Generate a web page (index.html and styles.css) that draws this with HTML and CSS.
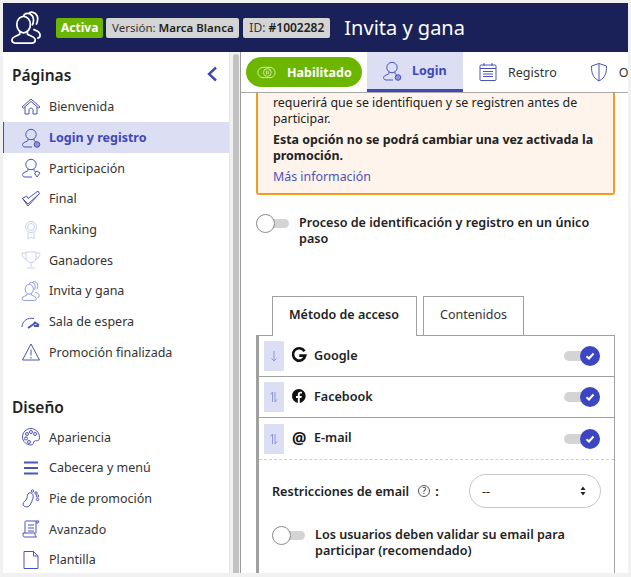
FILE: index.html
```html
<!DOCTYPE html>
<html lang="es">
<head>
<meta charset="utf-8">
<title>Invita y gana</title>
<link rel="stylesheet" href="styles.css">
</head>
<body>
<svg class="defs" width="0" height="0">
  <defs>
    <symbol id="user" viewBox="0 0 20 20"><circle cx="10" cy="6.500" r="5.200"/><path d="M7 11v1.500c0 1-5.500 1.500-5.500 4 0 1.500 1 2.500 2.500 2.500h7M13 11v1.500c0 .5 1 1 2 1.500"/></symbol>
    <symbol id="users" viewBox="0 0 34 34"><ellipse cx="14" cy="14" rx="7" ry="8.500"/><path d="M10 22v2c-2 1.500-8 2-8 6 0 2 1 3 3 3h18c2 0 3-1 3-3 0-4-6-4.500-8-6v-2M14 5c1-3 6-4 9 0 1.500 2 1.500 6 0 10M19 3c2-3 7-2 9 2 1 3 .5 6-1 9M24 19c3 1 7 2 7 6 0 2-1 3-3 3"/></symbol>
  </defs>
</svg>
<div class="app">
  <header class="topbar">
    <svg class="logo" viewBox="0 0 34 34"><use href="#users"/></svg>
    <span class="tag tag-green">Activa</span>
    <span class="tag tag-version">Versión: <b>Marca Blanca</b></span>
    <span class="tag tag-id">ID: <b>#1002282</b></span>
    <h1 class="title">Invita y gana</h1>
  </header>
  <div class="body">
    <aside class="side">
      <nav class="side-scroll">
        <div class="side-head">
          <h2 class="side-title">Páginas</h2>
          <svg class="chev" viewBox="0 0 12 16"><path d="M10 1.500 3 8l7 6.500"/></svg>
        </div>
        <a class="item"><svg class="ic" viewBox="0 0 20 20"><path d="M1 10 10 2l9 8-1.500 1L10 4.500 2.500 11zM4 10v7h4v-4c0-2.500 4-2.500 4 0v4h4v-7"/></svg>Bienvenida</a>
        <a class="item active"><svg class="ic" viewBox="0 0 20 20"><use href="#user"/><circle cx="16" cy="16.500" r="2.800" class="fillsoft"/></svg>Login y registro</a>
        <a class="item"><svg class="ic" viewBox="0 0 20 20"><use href="#user"/><path d="m13.500 15 2.500-2 3 2-3 4z"/></svg>Participación</a>
        <a class="item"><svg class="ic" viewBox="0 0 20 20"><path d="M1.500 9.500 7 15 18.500 4.500M1.500 9.500l4-2.500L7 9.500 17 2l1.500 2.500M1.500 9.500 7 17l11.500-12.500"/></svg>Final</a>
        <a class="item"><svg class="ic faint" viewBox="0 0 20 20"><circle cx="10" cy="7" r="5.500"/><circle cx="10" cy="7" r="3.500"/><path d="M7 12v7l3-2 3 2v-7"/></svg>Ranking</a>
        <a class="item"><svg class="ic faint" viewBox="0 0 20 20"><path d="M5 2h10v6c0 6-10 6-10 0zM5 3H1c0 4 2 6 5 6.500M15 3h4c0 4-2 6-5 6.500M10 13v4M6 18h8"/></svg>Ganadores</a>
        <a class="item"><svg class="ic" viewBox="0 0 34 34"><use href="#users"/></svg>Invita y gana</a>
        <a class="item"><svg class="ic" viewBox="0 0 20 20"><path d="M1 15C1 9 7 5 13 6.500"/><path d="M7 16 15 10.500M13 10l5 3M13 14h5" class="bold"/></svg>Sala de espera</a>
        <a class="item"><svg class="ic" viewBox="0 0 20 20"><path d="M10 2 1.500 18h17zM10 7.500v6M10 15v1.500"/></svg>Promoción finalizada</a>
        <h2 class="side-title second">Diseño</h2>
        <a class="item"><svg class="ic" viewBox="0 0 20 20"><path d="M10 1.500c-5 0-8.500 4-8.500 8.500s4 8 8.500 8c3 0 2-3 3.500-4 1.500-.8 5 1 5-3.500 0-5-4-9-8.500-9z"/><circle cx="6" cy="7" r="1.500"/><circle cx="10" cy="5" r="1.500"/><circle cx="14" cy="7" r="1.500"/><circle cx="5" cy="11.500" r="1.500"/><circle cx="8" cy="15" r="1.500"/></svg>Apariencia</a>
        <a class="item"><svg class="ic" viewBox="0 0 20 20"><path class="bold" d="M3 4.500h14M3 10h14M3 15.500h14"/></svg>Cabecera y menú</a>
        <a class="item"><svg class="ic" viewBox="0 0 20 20"><path d="M8 4c3-1 5 2 4 5-1 2.500-1 4-3 7-2 3-7 2-7-1 0-2 3-3 4-6 .5-2 0-4 2-5z"/><circle cx="11.500" cy="2" r="1.200"/><circle cx="15" cy="4" r="1.200"/><circle cx="16.500" cy="7" r="1.200"/><circle cx="16.500" cy="10.500" r="1.200"/></svg>Pie de promoción</a>
        <a class="item"><svg class="ic" viewBox="0 0 20 20"><path d="M5 2h13l-1 2h-2M5 2c-1 0-1 1-1 2v10M15 2v12M7 6h6M7 9h6M7 12h6M2 14h12c0 1 0 4 1.500 4H3c-1 0-1-3-1-4z"/></svg>Avanzado</a>
        <a class="item"><svg class="ic" viewBox="0 0 20 20"><path d="M3 1.500h9.500L17 6v12.500H3zM12.500 1.500V6H17"/></svg>Plantilla</a>
      </nav>
      <div class="scrollbar"><span class="thumb"></span></div>
    </aside>
    <main class="main">
      <div class="tabs">
        <button class="enabled"><svg class="pill-ic" viewBox="0 0 22 14"><rect x="1" y="1" width="20" height="12" rx="6"/><circle cx="12" cy="7" r="4.500"/><path d="M11 5v4M13 5v4"/></svg>Habilitado</button>
        <a class="tab active"><svg class="ic" viewBox="0 0 20 20"><use href="#user"/><circle cx="16" cy="16.500" r="2.800" class="fillsoft"/></svg>Login</a>
        <a class="tab tab-reg"><svg class="ic" viewBox="0 0 20 20"><rect x="2" y="3" width="16" height="15.500" rx="1"/><path d="M6 1v3M14 1v3M2 6.500h16M5 9.500h10M5 12h10M5 14.500h10"/></svg>Registro</a>
        <a class="tab"><svg class="ic" viewBox="0 0 20 20"><path d="M10 1.500 2.500 4c0 7 1 11.500 7.500 15 6.500-3.500 7.500-8 7.500-15zM10 1.500V19"/></svg>O</a>
      </div>
      <div class="content">
        <div class="notice">
          <p class="n-text">requerirá que se identifiquen y se registren antes de participar.</p>
          <p class="n-bold">Esta opción no se podrá cambiar una vez activada la promoción.</p>
          <a class="n-link">Más información</a>
        </div>
        <div class="opt opt-main">
          <span class="sw"><span class="knob"></span></span>
          <span class="opt-label">Proceso de identificación y registro en un único paso</span>
        </div>
        <div class="subtabs">
          <span class="subtab on">Método de acceso</span>
          <span class="subtab">Contenidos</span>
        </div>
        <div class="panel">
          <div class="row">
            <span class="drag"><svg viewBox="0 0 14 14"><path d="M7 2v10M4.500 9.500 7 12l2.500-2.500"/></svg></span>
            <svg class="brand" viewBox="1 1 14 14"><path class="g" d="M13.500 4.200A6.200 6.200 0 1 0 14.300 8.600H8.300"/></svg>
            <span class="row-label">Google</span>
            <span class="sw on"><span class="knob"><svg viewBox="0 0 12 12"><path d="m2.500 6.200 2.500 2.300 4.500-5"/></svg></span></span>
          </div>
          <div class="row">
            <span class="drag"><svg viewBox="0 0 14 14"><path d="M5.500 12V2L3.500 4.500M8 2v10l2-2.500"/></svg></span>
            <svg class="brand" viewBox="1 1 14 14"><path class="f" d="M8 1a7 7 0 0 0-1.200 13.900V10H5V8h1.800V6.500c0-1.800 1-2.800 2.700-2.800l1.500.1v1.800h-1c-.8 0-1.200.5-1.200 1.100V8h2l-.3 2H8.800v4.900A7 7 0 0 0 8 1z"/></svg>
            <span class="row-label">Facebook</span>
            <span class="sw on"><span class="knob"><svg viewBox="0 0 12 12"><path d="m2.500 6.200 2.500 2.300 4.500-5"/></svg></span></span>
          </div>
          <div class="row row-last">
            <span class="drag"><svg viewBox="0 0 14 14"><path d="M5.500 12V2L3.500 4.500M8 2v10l2-2.500"/></svg></span>
            <span class="at">@</span>
            <span class="row-label">E-mail</span>
            <span class="sw on"><span class="knob"><svg viewBox="0 0 12 12"><path d="m2.500 6.200 2.500 2.300 4.500-5"/></svg></span></span>
          </div>
          <div class="email">
            <div class="restrict">
              <span class="r-label">Restricciones de email</span>
              <span class="help">?</span>
              <span class="r-colon">:</span>
              <span class="select">--<svg viewBox="0 0 8 12"><path d="M4 1.500 6.500 5h-5zM4 10.500 1.500 7h5z"/></svg></span>
            </div>
            <div class="opt">
              <span class="sw"><span class="knob"></span></span>
              <span class="opt-label">Los usuarios deben validar su email para participar (recomendado)</span>
            </div>
          </div>
        </div>
      </div>
    </main>
  </div>
</div>
</body>
</html>
```

FILE: styles.css
```css
* { box-sizing: border-box; }
html, body { margin: 0; height: 100%; overflow: hidden; }
body { background: #f1f1f1; font-family: "Noto Sans", sans-serif; color: #222; font-size: 13px; }
.defs { position: absolute; }
.app { width: 625px; height: 570px; margin: 3px 0 0 3px; display: flex; flex-direction: column; overflow: hidden; background: #fff; }

.topbar { height: 49px; background: #192158; display: flex; align-items: center; padding-left: 7px; flex: none; }
.logo { width: 33px; height: 33px; fill: none; stroke: #fff; stroke-width: 1.800; margin-right: 13px; }
.tag { height: 20px; line-height: 20px; padding: 0 5px; background: #d4d4d4; border-radius: 2px; font-size: 11.500px; color: #333; margin-right: 3px; white-space: nowrap; }
.tag b { font-weight: 600; color: #222; }
.tag-green { background: #6db600; color: #fff; font-weight: 700; padding: 0 5px; font-size: 12px; }
.tag-version { width: 133px; text-align: center; padding: 0; margin-right: 4px; }
.tag-id { font-size: 12px; width: 87px; text-align: center; padding: 0; }
.title { font-size: 20px; font-weight: 400; color: #fff; margin: 0 0 0 11px; white-space: nowrap; }

.body { flex: 1; display: flex; min-height: 0; }
.side { width: 237px; display: flex; flex: none; }
.side-scroll { width: 226px; flex: none; padding-top: 12px; overflow: hidden; }
.scrollbar { width: 11px; padding: 2px 1px 0 3px; background: #f1f1f1; border-left: 1px solid #e6e6e6; }
.thumb { display: block; height: 100%; background: #c2c2c2; border-radius: 3px 3px 0 0; }
.side-head { display: flex; justify-content: space-between; align-items: center; padding-right: 11px; }
.side-title { font-size: 15.500px; font-weight: 600; margin: 0 0 5.500px 9px; color: #222; }
.second { margin-top: 28.700px; margin-bottom: 3.500px; }
.chev { width: 12px; height: 16px; fill: none; stroke: #3f48b8; stroke-width: 2.400; margin-bottom: 7px; }
.item { display: flex; align-items: center; height: 30.700px; padding-left: 18px; font-size: 12.500px; color: #333; white-space: nowrap; }
.item .ic { margin-right: 8px; }
.item.active { background: #dcdff3; border-left: 1px solid #3f48b8; padding-left: 17px; color: #3f48b8; font-weight: 700; }
.ic { width: 20px; height: 20px; flex: none; fill: none; stroke: #4b53b8; stroke-width: 1; }
.ic.faint { stroke: #ccd0ec; }
.ic .bold { stroke-width: 2; }
.fillsoft { fill: #8f95d8; }

.main { flex: 1; min-width: 0; display: flex; flex-direction: column; border-left: 1px solid #9a9a9a; }
.tabs { height: 41px; flex: none; display: flex; align-items: stretch; border-bottom: 1px solid #a8a8a8; padding-left: 5px; overflow: hidden; }
.enabled { height: 30px; margin: 5px 5px 0 0; width: 116px; flex: none; border: 0; border-radius: 15px; background: #6db600; color: #fff; font: 700 12.500px "Noto Sans", sans-serif; display: flex; align-items: center; gap: 11px; padding: 0 0 0 11px; }
.pill-ic { width: 19px; height: 13px; fill: none; stroke: #dff2c0; stroke-width: 1; }
.tab { display: flex; align-items: center; gap: 10px; color: #333; font-size: 12.500px; padding: 0 20px 0 15px; flex: none; white-space: nowrap; }
.tab-reg { padding-right: 17px; }
.tab.active { width: 96px; background: #dcdff3; border-bottom: 3px solid #3f48b8; color: #3f48b8; font-weight: 700; }

.content { flex: 1; min-height: 0; overflow: hidden; padding-left: 15px; }
.notice { width: 359px; height: 102px; background: #fff4ec; border: 2px solid #f39c1f; border-top: 0; border-radius: 0 0 3px 3px; padding: 2px 15px 0; line-height: 16px; font-size: 12.400px; }
.notice p { margin: 0 0 5px; }
.n-bold { font-weight: 700; }
.n-link { color: #4b53b8; }

.opt { display: flex; gap: 10px; font-weight: 600; font-size: 12.600px; line-height: 16px; }
.opt-main { margin-top: 20px; width: 359px; }
.opt-label { flex: 1; }
.sw { position: relative; display: block; width: 33px; height: 9px; background: #d4d4d4; border-radius: 5px; flex: none; margin-top: 4px; margin-left: 0; }
.sw .knob { position: absolute; left: 0; top: -5px; width: 19px; height: 19px; border-radius: 50%; background: #fff; border: 1px solid #8a8a8a; }
.sw.on { width: 36px; height: 10px; margin: 0 14px 0 auto; }
.sw.on .knob { left: auto; right: 0; top: -5px; width: 20px; height: 20px; border: 0; background: #3d46c2; display: flex; align-items: center; justify-content: center; }
.sw.on svg { width: 12px; height: 12px; fill: none; stroke: #fff; stroke-width: 2; }

.subtabs { display: flex; gap: 6px; margin: 49px 0 0 16px; height: 40px; position: relative; z-index: 1; font-size: 12.500px; }
.subtab { height: 39px; line-height: 35px; padding: 0 16px; border: 1px solid #a0a0a0; border-bottom: 0; background: #fff; color: #333; white-space: nowrap; }
.subtab.on { height: 40px; width: 145px; font-weight: 600; color: #222; }

.panel { width: 359px; margin-top: -1px; border: 1px solid #a0a0a0; border-left-width: 3px; border-bottom: 0; }
.row { height: 41px; display: flex; align-items: center; padding-left: 5px; border-bottom: 1px solid #a0a0a0; }
.row-last { border-bottom: 1px dashed #cfcfcf; height: 42px; }
.drag { width: 20px; height: 30px; background: #dcdff3; display: flex; align-items: center; justify-content: center; margin-right: 8px; }
.drag svg { width: 14px; height: 14px; fill: none; stroke: #8f95d8; stroke-width: 1; }
.brand { width: 14px; height: 14px; margin-right: 8px; margin-bottom: 2px; overflow: visible; }
.g { fill: none; stroke: #111; stroke-width: 2.600; }
.f { fill: #111; }
.at { width: 14px; margin: 0 8px 2px 0; font-weight: 700; font-size: 16px; line-height: 16px; text-align: center; color: #111; }
.row-label { font-weight: 600; font-size: 12.600px; margin-bottom: 2px; }

.email { padding: 14px 0 0 13px; height: 120px; }
.restrict { display: flex; align-items: center; font-weight: 600; font-size: 12.600px; height: 34px; }
.help { width: 12px; height: 12px; margin-left: 9px; border: 1px solid #555; border-radius: 50%; font-size: 9px; line-height: 10px; text-align: center; font-weight: 400; flex: none; }
.r-colon { margin-left: 5px; font-weight: 700; }
.select { margin-left: auto; margin-right: 13px; width: 132px; height: 34px; border: 1px solid #c8c8c8; border-radius: 17px; padding: 0 13px 0 12px; display: flex; align-items: center; justify-content: space-between; font-weight: 400; }
.select svg { width: 8px; height: 12px; fill: #222; }
.email .opt { margin-top: 19px; padding-right: 20px; }
```
